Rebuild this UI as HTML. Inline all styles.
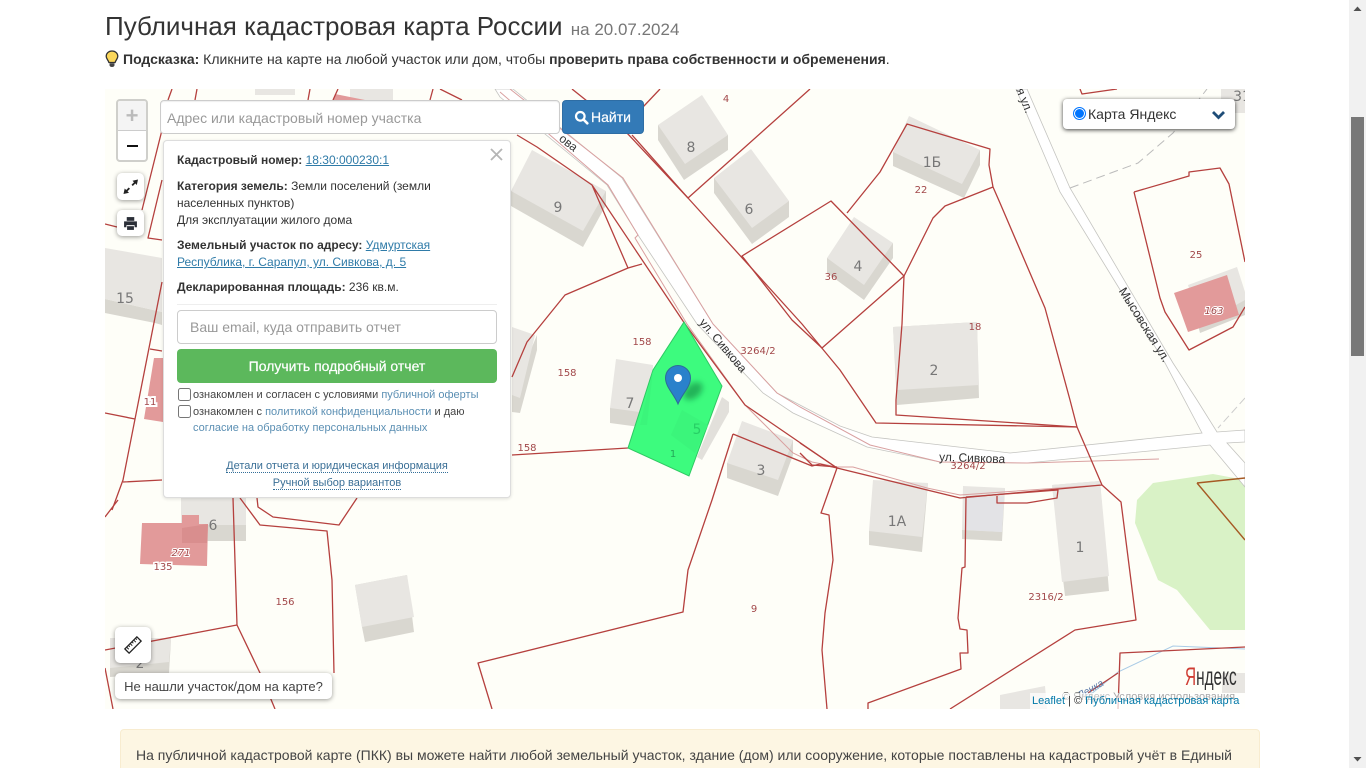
<!DOCTYPE html>
<html lang="ru"><head><meta charset="utf-8"><title>Публичная кадастровая карта России</title>
<style>
html,body{margin:0;padding:0;width:1366px;height:768px;overflow:hidden;background:#fff}
body{font-family:"Liberation Sans",Arial,sans-serif;color:#333;font-size:14px;position:relative}
.a{position:absolute}
a{color:#337ab7}
.sb{left:1349px;top:0;width:17px;height:768px;background:#f1f1f1}
.th{left:1351px;top:117px;width:13px;height:239px;background:#787878}
h1{position:absolute;left:105px;top:11px;margin:0;font-size:26px;font-weight:400;line-height:30px;white-space:nowrap;color:#333}
h1 small{font-size:17px;color:#777;margin-left:1px}
.hint{left:123px;top:51px;line-height:17px;white-space:nowrap}
.ctl{background:#fff;border-radius:5px;box-shadow:0 1px 5px rgba(0,0,0,.4);display:flex;align-items:center;justify-content:center}
.input{box-sizing:border-box;background:#fff;border:1px solid #ccc;border-radius:4px;color:#999;white-space:nowrap}
.pop{left:163px;top:140px;width:348px;height:358px;box-sizing:border-box;background:#fff;border:1px solid #ddd;border-radius:4px;box-shadow:0 1px 3px rgba(0,0,0,.12);font-size:12px;color:#333}
.pop div{position:absolute;white-space:nowrap}
.pop a{color:#2f7ba8}
.pop .t{line-height:17px;left:13px}
.chk{box-sizing:border-box;width:13px;height:13px;border:1px solid #767676;border-radius:2.5px;background:#fff;left:14px}
.sm{font-size:11px;line-height:16px;color:#444;left:29px}
.sm span{color:#5b8fb3}
.lnk{left:0;width:346px;text-align:center;font-size:11px;line-height:14px}
.lnk span{color:#3a6f96;border-bottom:1px dotted #336f99}
</style></head><body>
<h1>Публичная кадастровая карта России <small>на 20.07.2024</small></h1>
<svg class="a" style="left:105px;top:50px" width="14" height="18" viewBox="0 0 14 18"><path d="M7 1C3.6 1 1.2 3.4 1.2 6.3c0 2.6 2 3.6 2.7 6.2h6.2c.7-2.6 2.7-3.6 2.7-6.2C12.800 3.400 10.400 1 7 1z" fill="#fbd75b" stroke="#333" stroke-width="1.300"/><path d="M4.500 13.300h5v1.800c0 1-1 1.900-2.500 1.900s-2.500-.9-2.500-1.900z" fill="#444"/></svg>
<div class="a hint"><b>Подсказка:</b> Кликните на карте на любой участок или дом, чтобы <b>проверить права собственности и обременения</b>.</div>

<svg class="a" style="left:105px;top:89px" width="1140" height="620" viewBox="105 89 1140 620" font-family="'DejaVu Sans',sans-serif">
<defs><filter id="bl" x="-50%" y="-50%" width="200%" height="200%"><feGaussianBlur stdDeviation="3"/></filter></defs>
<rect x="105" y="89" width="1140" height="620" fill="#fefef8"/>
<polygon points="1137,500 1153,483 1213,474 1245,480 1245,630 1210,630 1177,590 1158,580 1135,523" fill="#d9f2c6"/>
<!-- roads -->
<g fill="#fff" stroke="#c4c4c0" stroke-width=".8">
<path d="M513,89 L622,178 L713,324 L777,393 L840,426 L872,437 L1010,453 L1202,433 L1165,363 L1060,192 L1016,89 L1027,89 L1070,188 L1173,363 L1197,400 L1217,432 L1245,430 L1245,442 L1227,443 L1245,463 L1245,487 L1210,445 L1027,463 L940,462 L867,447 L793,413 L763,393 L697,324 L638,235 L607,185 L500,97 L495,89Z"/>
</g>
<path d="M1070,188 L1138,163 L1173,133 L1207,89" fill="none" stroke="#bbb" stroke-dasharray="9 5"/>
<path d="M1245,398 L1218,428" fill="none" stroke="#ccc" stroke-dasharray="8 4"/>
<!-- buildings -->
<g fill="#d9d7d0">
<polygon points="658,125 658,140 684,180 728,150 728,135"/>
<polygon points="714,178 714,193 752,244 789,217 789,201"/>
<polygon points="511,191 511,206 583,247 606,205 606,191"/>
<polygon points="893,152 893,166 964,198 980,165 980,150"/>
<polygon points="827,258 827,273 864,300 893,258 893,243"/>
<polygon points="893,327 897,405 979,398 977,322"/>
<polygon points="869,531 869,545 922,552 928,483"/>
<polygon points="962,530 962,539 1002,541 1005,488"/>
<polygon points="1052,485 1065,596 1109,591 1100,481"/>
<polygon points="610,408 610,423 647,428 653,365"/>
<polygon points="727,463 727,478 778,496 793,455 793,440"/>
<polygon points="512,395 512,412 520,413 537,350 537,335"/>
<polygon points="105,299 162,312 162,325 155,323 105,313"/>
<polygon points="181,525 181,541 246,541 246,525"/>
<polygon points="355,585 362,627 365,642 414,632 407,575"/>
<polygon points="110,668 110,677 169,673 171,640"/>
<polygon points="1189,290 1200,333 1245,315 1245,295"/>
</g>
<g fill="#e8e6e2">
<polygon points="702,95 728,135 685,164 658,125"/>
<polygon points="751,149 789,201 752,228 714,178"/>
<polygon points="532,150 606,191 583,231 511,191"/>
<polygon points="909,116 980,150 962,184 893,152"/>
<polygon points="854,217 893,243 864,285 827,258"/>
<polygon points="893,327 977,322 979,385 897,390"/>
<polygon points="873,480 928,483 922,537 869,531"/>
<polygon points="963,486 1005,488 1002,532 962,530"/>
<polygon points="1052,485 1100,481 1109,576 1062,582"/>
<polygon points="616,359 653,365 647,413 610,408"/>
<polygon points="742,421 793,440 778,480 727,463"/>
<polygon points="512,327 535,335 520,398 512,395"/>
<polygon points="105,248 162,258 162,312 105,299"/>
<polygon points="181,489 246,489 246,525 181,525"/>
<polygon points="355,585 407,575 414,617 362,627"/>
<polygon points="110,638 171,638 169,662 110,668"/>
<polygon points="1188,285 1237,267 1245,292 1245,300 1200,325"/>
<polygon points="1221,89 1245,89 1245,113 1221,113"/>
<polygon points="1222,673 1245,673 1245,693 1222,693"/>
<polygon points="1000,695 1045,686 1047,709 1000,709"/>
<polygon points="350,89 393,89 393,100 350,100"/>
<polygon points="255,89 295,89 295,95 255,95"/>
</g>
<polygon points="966,497 1004,497 1002,532 966,530" fill="#e3e3e6"/>
<polygon points="722,397 729,402 729,412 702,460 697,457" fill="#e2e0db"/>
<!-- pink cadastral buildings -->
<g fill="#e29a9a">
<polygon points="1174,293 1227,275 1239,315 1188,332"/>
<polygon points="142,523 182,523 182,515 199,515 199,524 208,524 207,566 140,564"/>
<polygon points="154,358 163,358 163,422 144,419"/>
<polygon points="335,94 365,100 333,100"/>
</g>
<polygon points="182,528 208,524 207,543 182,543" fill="#d98e8e"/>
<!-- thin pink lines -->
<g fill="none" stroke="#d9a0a0" stroke-width="1">
<path d="M510,89 L623,178 L713,324 L777,393 L800,407 L870,445 L940,462 L1027,463 L1159,459"/>
<path d="M500,92 L608,185 L638,235 L635,238 L687,324 L745,405 L793,453 L812,462 L837,467 L853,467 L927,488 L960,495 L1102,485"/>
</g>
<path d="M1090,695 L1118,672 L1173,646 L1245,649" fill="none" stroke="#a9cbe6" stroke-width="1"/>
<!-- red parcel lines -->
<g fill="none" stroke="#b5403e" stroke-width="1.300" stroke-linejoin="round">
<path d="M810,89 L688,198 L627,133 L572,89"/>
<path d="M632,135 L688,198 L802,324 L840,370 L876,423 L1077,427"/>
<path d="M660,89 L643,107"/>
<path d="M742,256 L831,201 L904,276 L822,348 L792,320 Z"/>
<path d="M904,276 L902,324 L896,400 L896,415 L1077,427"/>
<path d="M847,213 L880,172 L907,124 L990,149 L989,165 L993,187 L1000,203 L1045,308 L1070,400 L1077,427 L1102,485 L1121,502 L1136,620 L1075,630 L950,709"/>
<path d="M993,187 L945,206 L933,218 L904,276"/>
<path d="M837,468 L960,498 L1102,485"/>
<path d="M966,497 L1058,490 L1057,498 L1027,503 L997,503 L997,496"/>
<path d="M800,443 L837,468 M800,453 L812,465 L837,467"/>
<path d="M733,434 L812,466 L820,464 L837,468 L821,513 L829,515 L833,560 L825,613 L822,650 L827,709"/>
<path d="M733,434 L712,500 L688,570 L683,612 L478,663 L492,709"/>
<path d="M868,709 L868,703 L961,669 L960,653 L968,653 L967,630 L960,629 L958,618 L962,568 L965,567 L966,497"/>
<path d="M1118,709 L1120,653 L1245,647 M1118,673 L1088,693"/>
<path d="M517,135 L537,147 L592,185 L628,268 L642,264 M592,185 L685,324 L745,405 L837,468"/>
<path d="M628,268 L565,295 L527,342 L512,377"/>
<path d="M512,455 L628,448"/>
<path d="M1134,192 L1189,176 L1189,172 L1220,168 L1229,184 L1245,262 M1134,192 L1160,298 L1165,312 L1189,350 L1233,327 L1245,307"/>
<path d="M1080,89 L1082,94 L1117,89"/>
<path d="M162,130 L142,210 M105,224 L117,227 M162,180 L148,238 L162,240"/>
<path d="M162,282 L123,480 L112,510 M150,349 L162,351 M105,413 L135,419 M123,482 L162,480"/>
<path d="M233,498 L237,625 M105,650 L237,625 L260,673 L275,709"/>
<path d="M240,498 L260,525 L327,531 L332,580 L334,673"/>
<path d="M257,498 L258,507 L273,517 L339,525 L357,498"/>
<path d="M105,517 L118,500 M105,668 L113,709"/>
<path d="M172,89 L168,100 M197,89 L195,100 M310,89 L308,100 M338,89 L333,100 M433,89 L430,100 M440,89 L462,100"/>
</g>
<path d="M1197,483 L1245,478 M1197,483 L1245,540" fill="none" stroke="#a65a24" stroke-width="1.400"/>
<!-- selected parcel -->
<polygon points="684,322 722,386 689,476 628,448 653,370" fill="#3dfb7e" stroke="#2fc863"/>
<polygon points="682,410 671,435 695,453 708,425" fill="#3bf57b"/>
<polygon points="653,370 647,425 640,425" fill="#3bf57b"/>
<ellipse cx="693" cy="391" rx="11" ry="7" fill="#0e7a3a" opacity=".55" transform="rotate(-40 693 391)" filter="url(#bl)"/>
<!-- marker -->
<path d="M678,404 C674,394 665.500,387 665.500,378 A12.500,12.500 0 0 1 690.500,378 C690.500,387 682,394 678,404Z" fill="#2a81cb" stroke="#2e6c97"/>
<circle cx="678" cy="378" r="4" fill="#fff"/>
<!-- grey house numbers -->
<g fill="#777" font-size="14" text-anchor="middle">
<text x="691" y="152">8</text><text x="749" y="214">6</text><text x="558" y="212">9</text><text x="932" y="167">1Б</text><text x="858" y="271">4</text><text x="934" y="375">2</text><text x="630" y="408">7</text><text x="761" y="475">3</text><text x="897" y="526">1А</text><text x="1080" y="552">1</text><text x="125" y="303">15</text><text x="213" y="530">6</text><text x="140" y="668">2</text><text x="1242" y="101">31</text>
<text x="697" y="434" fill="#28cf66">5</text>
</g>
<text x="673" y="457" fill="#24a858" font-size="10" text-anchor="middle">1</text>
<!-- red numbers -->
<g fill="#a2484a" font-size="10" text-anchor="middle">
<text x="726" y="102">4</text><text x="921" y="193">22</text><text x="831" y="280">36</text><text x="975" y="330">18</text><text x="758" y="354">3264/2</text><text x="642" y="345">158</text><text x="567" y="376">158</text><text x="527" y="451">158</text><text x="968" y="469">3264/2</text><text x="754" y="612">9</text><text x="1046" y="600">2316/2</text><text x="1196" y="258">25</text><text x="285" y="605">156</text>
<text x="163" y="570" paint-order="stroke" stroke="#fff" stroke-width="3">135</text>
</g>
<g fill="#a2484a" font-size="10" text-anchor="middle" font-style="italic" paint-order="stroke" stroke="#fff" stroke-width="2">
<text x="1214" y="314">163</text><text x="181" y="556">271</text><text x="150" y="405" font-style="normal" stroke-width="4">11</text>
</g>
<!-- street names -->
<g font-family="'Liberation Sans',sans-serif" font-size="12" fill="#333" text-anchor="middle">
<text transform="translate(720,348) rotate(50)">ул. Сивкова</text>
<text transform="translate(972,462) rotate(2)">ул. Сивкова</text>
<text transform="translate(1141,327) rotate(58)" font-size="12.500">Мысовская ул.</text>
<text transform="translate(1021,102) rotate(68)">я ул.</text>
<text transform="translate(566,146) rotate(38)">ова</text>
<text transform="translate(1092,692) rotate(-30)" fill="#5878a8" font-style="italic" font-size="10">Ленка</text>
</g>
<!-- yandex -->
<g font-family="'Liberation Sans',sans-serif" font-size="24" transform="translate(1185,685) scale(.64,1.050)"><text fill="#cf3c33">Я<tspan fill="#333">ндекс</tspan></text></g>
<text x="1062" y="700" font-family="'Liberation Sans',sans-serif" font-size="11" fill="#222">© Яндекс</text>
<rect x="1030" y="693" width="215" height="16" fill="#fff" opacity=".72"/>
<text x="1113" y="700" font-family="'Liberation Sans',sans-serif" font-size="11" fill="#aaa">Условия использования</text>
</svg>

<div class="a" style="left:1032px;top:694px;font-size:11px;line-height:14px;white-space:nowrap;color:#333"><span style="color:#0078a8">Leaflet</span> | © <span style="color:#0078a8">Публичная кадастровая карта</span></div>

<!-- zoom -->
<div class="a" style="left:116px;top:99px;width:32px;height:63px;box-sizing:border-box;border:2px solid #cfcfcb;border-radius:4px;background:#fff;overflow:hidden">
<div style="height:29px;background:#f4f4f4;border-bottom:1px solid #ccc;color:#bbb;font:bold 22px/29px 'Liberation Sans',sans-serif;text-align:center">+</div>
<div style="position:absolute;left:9px;top:44px;width:11px;height:2px;background:#111"></div>
</div>
<div class="a ctl" style="left:117px;top:173px;width:27px;height:27px">
<svg width="17" height="17" viewBox="0 0 17 17" fill="#222"><path d="M16 1.500 L10.500 2.700 L12 4.200 L9.500 6.700 L10.800 8 L13.300 5.500 L14.800 7Z"/><path d="M1.500 16 L7 14.800 L5.500 13.300 L8 10.800 L6.700 9.500 L4.200 12 L2.700 10.500Z"/></svg></div>
<div class="a ctl" style="left:117px;top:210px;width:27px;height:26px">
<svg width="15" height="15" viewBox="0 0 14 14" fill="#2b2f38"><path d="M3.500 1h7v3.500h-7z"/><path d="M1 5h12v5.500h-2.200V8.500H3.200v2H1z"/><path d="M3.800 9.500h6.400v3.500H3.800z"/></svg></div>

<!-- search -->
<div class="a input" style="left:160px;top:100px;width:400px;height:34px;line-height:34px;padding-left:6px;font-size:14px;box-shadow:inset 0 1px 1px rgba(0,0,0,.07)">Адрес или кадастровый номер участка</div>
<div class="a" style="left:562px;top:100px;width:82px;height:34px;background:#337ab7;border:1px solid #2e6da4;box-sizing:border-box;border-radius:4px;color:#fff;font-size:14px;line-height:32px;white-space:nowrap">
<svg style="position:absolute;left:11px;top:9px" width="15" height="15" viewBox="0 0 15 15"><circle cx="6.300" cy="6.300" r="4.300" fill="none" stroke="#fff" stroke-width="2.200"/><path d="M9.500 9.500 L13.300 13.300" stroke="#fff" stroke-width="2.600" stroke-linecap="round"/></svg>
<span style="position:absolute;left:28px;-webkit-text-stroke:.2px #fff">Найти</span></div>

<!-- popup -->
<div class="a pop">
<div class="t" style="top:11px"><b>Кадастровый номер:</b> <a style="text-decoration:underline">18:30:000230:1</a></div>
<div class="t" style="top:37px"><b>Категория земель:</b> Земли поселений (земли</div>
<div class="t" style="top:54px">населенных пунктов)</div>
<div class="t" style="top:71px">Для эксплуатации жилого дома</div>
<div class="t" style="top:96px"><b>Земельный участок по адресу:</b> <a style="text-decoration:underline">Удмуртская</a></div>
<div class="t" style="top:113px"><a style="text-decoration:underline">Республика, г. Сарапул, ул. Сивкова, д. 5</a></div>
<div class="t" style="top:138px"><b>Декларированная площадь:</b> 236 кв.м.</div>
<div style="left:13px;top:163px;width:320px;height:1px;background:#eee"></div>
<div class="input" style="left:13px;top:169px;width:320px;height:34px;line-height:33px;padding-left:12px;font-size:14px">Ваш email, куда отправить отчет</div>
<div style="left:13px;top:208px;width:320px;height:34px;background:#5cb85c;border-radius:4px;color:#fff;text-align:center;font-size:14px;font-weight:400;line-height:34px;-webkit-text-stroke:.2px #fff">Получить подробный отчет</div>
<div class="chk" style="top:247px"></div>
<div class="sm" style="top:246px">ознакомлен и согласен с условиями <span>публичной оферты</span></div>
<div class="chk" style="top:264px"></div>
<div class="sm" style="top:263px">ознакомлен с <span>политикой конфиденциальности</span> и даю</div>
<div class="sm" style="top:279px"><span>согласие на обработку персональных данных</span></div>
<div class="lnk" style="top:318px"><span>Детали отчета и юридическая информация</span></div>
<div class="lnk" style="top:335px"><span>Ручной выбор вариантов</span></div>
<svg style="position:absolute;left:326px;top:7px" width="13" height="13" viewBox="0 0 13 13"><path d="M1 1 L12 12 M12 1 L1 12" stroke="#b5b5b5" stroke-width="1.800"/></svg>
</div>

<!-- layer select -->
<div class="a" style="left:1063px;top:99px;width:172px;height:30px;background:#fff;border-radius:4px;box-shadow:0 1px 4px rgba(0,0,0,.75)">
<div class="a" style="left:10px;top:8px;width:13px;height:13px;box-sizing:border-box;border-radius:50%;border:1px solid #0075ff;background:#0075ff;box-shadow:inset 0 0 0 1px #fff"></div>
<div class="a" style="left:25px;top:6px;font-size:14px;line-height:18px;color:#333;white-space:nowrap">Карта Яндекс</div>
<svg style="position:absolute;left:148px;top:11px" width="15" height="10" viewBox="0 0 15 10"><path d="M2 2 L7.500 7.500 L13 2" fill="none" stroke="#1f4d78" stroke-width="2.800"/></svg>
</div>

<!-- ruler & link -->
<div class="a ctl" style="left:115px;top:627px;width:36px;height:36px">
<svg width="18" height="18" viewBox="0 0 18 18"><g transform="rotate(-45 9 9)"><rect x="0.500" y="6" width="17" height="6" fill="#fff" stroke="#222" stroke-width="1.300"/><path d="M3 6v3M5.500 6v2M8 6v3M10.500 6v2M13 6v3M15.500 6v2" stroke="#222" stroke-width="1"/></g></svg></div>
<div class="a ctl" style="left:115px;top:673px;width:217px;height:26px;font-size:13px;color:#444;white-space:nowrap">Не нашли участок/дом на карте?</div>

<!-- info box -->
<div class="a" style="left:120px;top:729px;width:1140px;height:60px;box-sizing:border-box;background:#fdf6e3;border:1px solid #f8ecd0;border-radius:4px;padding:17px 15px;font-size:14px;line-height:17px;color:#444;white-space:nowrap">На публичной кадастровой карте (ПКК) вы можете найти любой земельный участок, здание (дом) или сооружение, которые поставлены на кадастровый учёт в Единый</div>

<!-- scrollbar -->
<div class="a sb"></div>
<div class="a th"></div>
<svg class="a" style="left:1349px;top:0" width="17" height="17"><path d="M4.500 11 L8.500 6.500 L12.500 11Z" fill="#505050"/></svg>
<svg class="a" style="left:1349px;top:751px" width="17" height="17"><path d="M4.500 6 L8.500 10.500 L12.500 6Z" fill="#505050"/></svg>
</body></html>
